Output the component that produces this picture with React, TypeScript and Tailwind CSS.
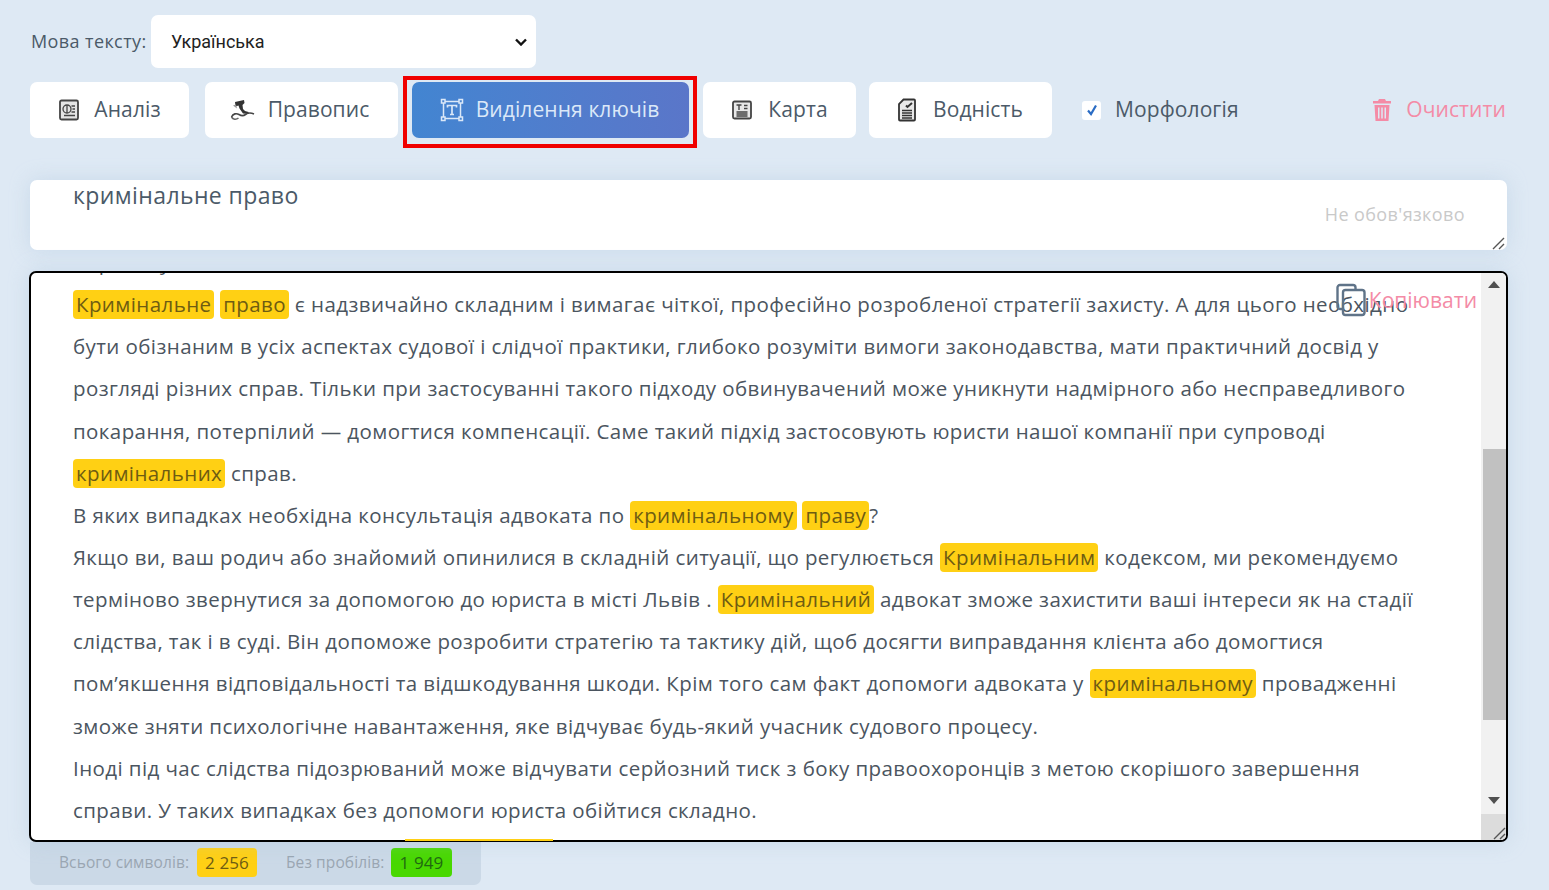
import React from "react";

const H = ({ children }: { children: React.ReactNode }) => (
  <span className="inline-block h-[29px] rounded-[4px] bg-[#ffd014] px-[3px] leading-[29px] text-[#6e5c12]">{children}</span>
);

const IconAnalysis = () => (
  <svg width="22" height="22" viewBox="0 0 22 22" fill="none" stroke="#444" strokeWidth="1.3">
    <rect x="2" y="1.5" width="18" height="19" rx="1.5" fill="#e4e4e4" strokeWidth="1.8" />
    <circle cx="9" cy="10" r="4" />
    <path d="M9 6v8M6 16.5h11M13.5 7h3.5M14.5 10h2.5M13.5 13h3.5" />
  </svg>
);
const IconSpell = () => (
  <svg width="26" height="22" viewBox="0 0 26 22" fill="none">
    <path d="M5 3l9-2 .5 3-2 2 .5 4 2 2 3.5 1 .5 2-6-.5-3.5-5-1-3-3 1z" fill="#333" />
    <path d="M3 6.5l3-1 1 4z" fill="#999" />
    <path d="M1.5 18c1.5-3.5 5-4 7.5-2.5s4.5 1.5 6.5 0 5-2 8.5-.5" stroke="#444" strokeWidth="1.6" />
    <path d="M1.5 18c1.5 2.5 4.5 3 7 1" stroke="#666" strokeWidth="1.6" />
  </svg>
);
const IconKey = () => (
  <svg width="24" height="24" viewBox="0 0 24 24" fill="none" stroke="#dbe8f8" strokeWidth="1.5">
    <rect x="3.5" y="3.5" width="17" height="17" />
    <rect x="1.5" y="1.5" width="3.5" height="3.5" fill="#4a85d0" />
    <rect x="19" y="1.5" width="3.5" height="3.5" fill="#4a85d0" />
    <rect x="1.5" y="19" width="3.5" height="3.5" fill="#4a85d0" />
    <rect x="19" y="19" width="3.5" height="3.5" fill="#4a85d0" />
    <path d="M7.5 9.5v-2h9v2M12 7.5v9M10 16.5h4" strokeWidth="1.7" />
  </svg>
);
const IconMap = () => (
  <svg width="22" height="22" viewBox="0 0 22 22" fill="none" stroke="#444" strokeWidth="1.4">
    <rect x="2" y="2.5" width="18" height="17" rx="1.5" fill="#e8e8e8" strokeWidth="1.8" />
    <path d="M5.5 6h5M8 6v5M13 6.5h3.5M13 9.5h3.5M5.5 13h11M5.5 15h11M5.5 17h11" />
  </svg>
);
const IconWater = () => (
  <svg width="18" height="24" viewBox="0 0 18 24" fill="none" stroke="#333" strokeWidth="1.4">
    <path d="M5.5 1.5H16a1 1 0 0 1 1 1v19a1 1 0 0 1-1 1H2a1 1 0 0 1-1-1V6z" fill="#e8e8e8" strokeWidth="1.8" />
    <path d="M4 12.5h10M4 15h10M4 17.5h10M4 20h10" strokeWidth="1.4" />
    <path d="M8 7.5L9.5 9 14 5" strokeWidth="2" />
  </svg>
);
const IconTrash = () => (
  <svg width="20" height="24" viewBox="0 0 20 24" fill="#f48ba6">
    <path d="M7 1h6l1 2h5v2.5H1V3h5z" />
    <path d="M2.5 7h15l-1 16h-13zM6 9.5v11h1.5v-11zM9.25 9.5v11h1.5v-11zM12.5 9.5v11H14v-11z" fillRule="evenodd" />
  </svg>
);
const IconCopy = () => (
  <svg width="30" height="34" viewBox="0 0 30 34" fill="none" stroke="#5f7388" strokeWidth="2.4">
    <path d="M7 26H4a2.5 2.5 0 0 1-2.5-2.5v-19A2.5 2.5 0 0 1 4 2h13a2.5 2.5 0 0 1 2.5 2.5V7" />
    <rect x="7" y="7" width="21.5" height="25" rx="2.5" />
  </svg>
);

const Btn = ({ icon, label, className }: { icon: React.ReactNode; label: string; className: string }) => (
  <button className={`flex h-[56px] items-center rounded-[7px] bg-white text-[21px] tracking-[0.1px] text-[#4b5a68] ${className}`}>
    {icon}
    <span>{label}</span>
  </button>
);

const Grip = () => (
  <svg width="14" height="14" viewBox="0 0 14 14" fill="none" stroke="#555" strokeWidth="1.4">
    <path d="M2 13L13 2M8 13l5-5" />
  </svg>
);

const lines: React.ReactNode[] = [
  <>Корисні у</>,
  <><H>Кримінальне</H> <H>право</H> є надзвичайно складним і вимагає чіткої, професійно розробленої стратегії захисту. А для цього необхідно</>,
  <>бути обізнаним в усіх аспектах судової і слідчої практики, глибоко розуміти вимоги законодавства, мати практичний досвід у</>,
  <>розгляді різних справ. Тільки при застосуванні такого підходу обвинувачений може уникнути надмірного або несправедливого</>,
  <>покарання, потерпілий — домогтися компенсації. Саме такий підхід застосовують юристи нашої компанії при супроводі</>,
  <><H>кримінальних</H> справ.</>,
  <>В яких випадках необхідна консультація адвоката по <H>кримінальному</H> <H>праву</H>?</>,
  <>Якщо ви, ваш родич або знайомий опинилися в складній ситуації, що регулюється <H>Кримінальним</H> кодексом, ми рекомендуємо</>,
  <>терміново звернутися за допомогою до юриста в місті Львів . <H>Кримінальний</H> адвокат зможе захистити ваші інтереси як на стадії</>,
  <>слідства, так і в суді. Він допоможе розробити стратегію та тактику дій, щоб досягти виправдання клієнта або домогтися</>,
  <>пом’якшення відповідальності та відшкодування шкоди. Крім того сам факт допомоги адвоката у <H>кримінальному</H> провадженні</>,
  <>зможе зняти психологічне навантаження, яке відчуває будь-який учасник судового процесу.</>,
  <>Іноді під час слідства підозрюваний може відчувати серйозний тиск з боку правоохоронців з метою скорішого завершення</>,
  <>справи. У таких випадках без допомоги юриста обійтися складно.</>,
];

export default function App() {
  return (
    <div className="h-[890px] overflow-hidden bg-[#dee9f4] pl-[30px] pr-[42px] pt-[15px] font-['Open_Sans',sans-serif]">
      <div className="flex items-center">
        <span className="w-[121px] whitespace-nowrap pl-[1px] text-[18px] tracking-[0.4px] text-[#4b5a68]">Мова тексту:</span>
        <div className="relative">
          <select className="block h-[53px] w-[385px] appearance-none rounded-[7px] bg-white pl-[20px] pr-[30px] font-['Roboto',sans-serif] text-[18px] text-[#222]">
            <option>Українська</option>
          </select>
          <svg className="pointer-events-none absolute right-[9px] top-[23px]" width="12" height="8" viewBox="0 0 12 8" fill="none" stroke="#111" strokeWidth="2.4">
            <path d="M1 1.5l5 5 5-5" />
          </svg>
        </div>
      </div>

      <div className="relative mt-[14px] flex items-center">
        <Btn className="w-[159px] justify-center gap-[14px]" icon={<IconAnalysis />} label="Аналіз" />
        <Btn className="ml-[16px] w-[193px] justify-center gap-[12px] pr-[4px]" icon={<IconSpell />} label="Правопис" />
        <button className="ml-[14px] flex h-[56px] w-[277px] items-center justify-center gap-[12px] rounded-[7px] bg-gradient-to-r from-[#4285d1] to-[#5a76c9] pr-[2px] text-[21px] tracking-[0.1px] text-[#dbe8f8]">
          <IconKey />
          <span>Виділення ключів</span>
        </button>
        <Btn className="ml-[14px] w-[153px] justify-center gap-[15px]" icon={<IconMap />} label="Карта" />
        <Btn className="ml-[13px] w-[183px] justify-center gap-[17px]" icon={<IconWater />} label="Водність" />
        <span className="ml-[30px] flex h-[19px] w-[19px] items-center justify-center rounded-[3px] bg-white">
          <svg width="12" height="12" viewBox="0 0 12 12" fill="none" stroke="#2a6cc4" strokeWidth="2.2">
            <path d="M2 6.5L5 10l5-8.5" />
          </svg>
        </span>
        <span className="ml-[14px] text-[21px] tracking-[0.1px] text-[#4b5a68]">Морфологія</span>
        <button className="ml-auto flex items-center gap-[14px] pr-[1px] text-[21px] tracking-[0.1px] text-[#f48ba6]">
          <IconTrash />
          <span>Очистити</span>
        </button>
        <div className="absolute left-[373px] top-[-6px] h-[72px] w-[294px] border-[4px] border-[#f00000]" />
      </div>

      <div className="relative mt-[42px] h-[70px] rounded-[7px] bg-white shadow-[0_0_20px_rgba(170,195,220,0.4)]">
        <textarea
          readOnly
          value="кримінальне право"
          className="block h-[70px] w-full resize-none rounded-[7px] bg-transparent pl-[43px] text-[23px] leading-[30px] tracking-[0.4px] text-[#4b5a68] outline-none"
        />
        <span className="pointer-events-none absolute right-[42px] top-[23px] text-[18px] leading-[22px] tracking-[0.4px] text-[#c9c9c9]">Не обов'язково</span>
        <span className="pointer-events-none absolute bottom-[0px] right-[2px]"><Grip /></span>
      </div>

      <div className="relative -mx-[1px] mt-[21px] flex h-[571px] overflow-hidden rounded-[7px] border-[2px] border-black bg-white shadow-[0_0_20px_rgba(170,195,220,0.4)]">
        <div className="min-w-0 flex-1 overflow-hidden pl-[42px]">
          <div className="mt-[-32px] whitespace-nowrap text-[20.5px] leading-[42.15px] tracking-[0.41px] text-[#4b5560]">
            {lines.map((l, i) => (
              <div key={i} className="h-[42.15px]">{l}</div>
            ))}
          </div>
        </div>
        <div className="flex w-[25px] shrink-0 flex-col bg-[#f1f1f1]">
          <div className="flex h-[176px] justify-center pt-[8px]">
            <div className="h-0 w-0 border-x-[6px] border-b-[7px] border-x-transparent border-b-[#505050]" />
          </div>
          <div className="ml-[2px] h-[271px] bg-[#c1c1c1]" />
          <div className="flex flex-1 items-end justify-center pb-[10px]">
            <div className="h-0 w-0 border-x-[6px] border-t-[7px] border-x-transparent border-t-[#505050]" />
          </div>
          <div className="flex h-[26px] items-end justify-end bg-[#dcdcdc]">
            <Grip />
          </div>
        </div>
        <button className="absolute right-[29px] top-[10px] flex items-start text-[21px] leading-[34px] text-[#f48ba6]">
          <span className="relative z-10 mr-[3px]"><IconCopy /></span>
          <span>Копіювати</span>
        </button>
      </div>
      <div className="relative">
        <div className="absolute left-[375px] top-[-3px] h-[2px] w-[148px] bg-[#ffd014]" />
      </div>

      <div className="flex h-[43px] w-[451px] items-center rounded-b-[7px] bg-[#cbd9e7] pb-[2px] pl-[29px] text-[15.5px] tracking-[0.1px] text-[#9aa6b2]">
        <span className="w-[132px] whitespace-nowrap">Всього символів:</span>
        <span className="ml-[6px] flex h-[29px] w-[60px] items-center justify-center rounded-[4px] bg-[#ffd014] text-[17px] text-[#6e5c12]">2 256</span>
        <span className="ml-[29px] w-[100px] whitespace-nowrap">Без пробілів:</span>
        <span className="ml-[5px] flex h-[29px] w-[61px] items-center justify-center rounded-[4px] bg-[#48d800] text-[17px] text-[#1f6a10]">1 949</span>
      </div>
    </div>
  );
}
